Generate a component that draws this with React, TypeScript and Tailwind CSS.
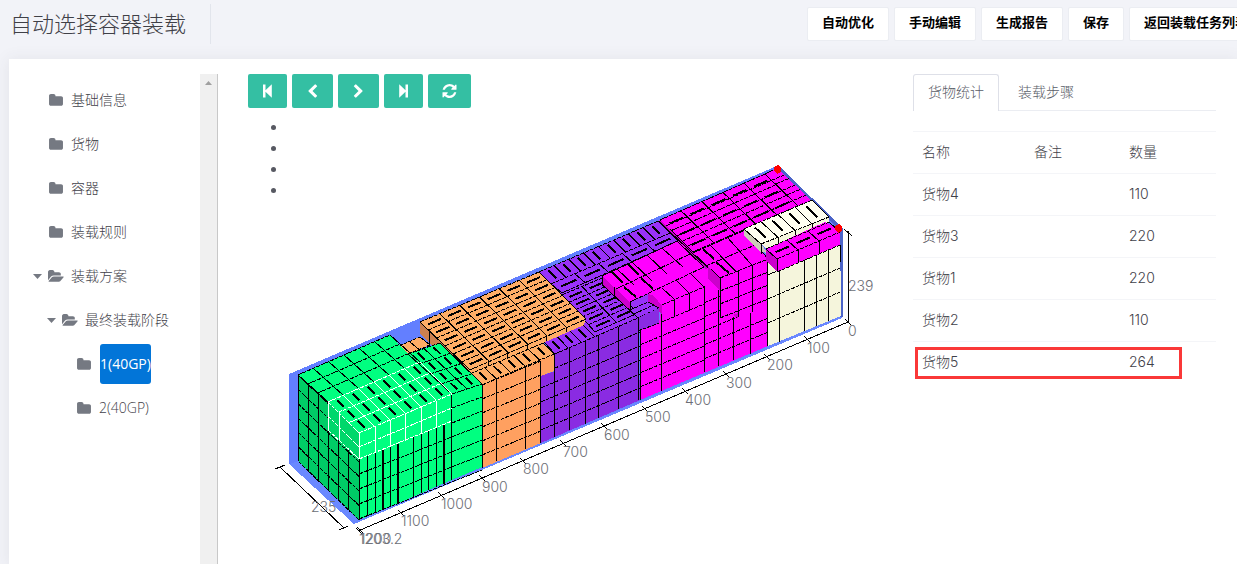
import React from "react";

type P = [number, number];
type Mark = "u" | "v";

const lerp = (a: P, b: P, t: number): P => [a[0] + (b[0] - a[0]) * t, a[1] + (b[1] - a[1]) * t];
const seg = (a: P, b: P) =>
  `M${a[0].toFixed(1)} ${a[1].toFixed(1)}L${b[0].toFixed(1)} ${b[1].toFixed(1)}`;

function Poly({ pts, fill }: { pts: P[]; fill: string }) {
  return <polygon points={pts.map((p) => p.join(",")).join(" ")} fill={fill} />;
}

/* A four-sided face a-b-c-d, split in nu columns (a to b) and nv rows (a to d). */
function Face({
  q,
  nu,
  nv,
  fill = "none",
  stroke = "#000",
  mark,
  markWidth = 2,
}: {
  q: [P, P, P, P];
  nu: number;
  nv: number;
  fill?: string;
  stroke?: string;
  mark?: Mark;
  markWidth?: number;
}) {
  const [a, b, c, d] = q;
  const at = (u: number, v: number) => lerp(lerp(a, b, u), lerp(d, c, u), v);
  let rows = "";
  let cols = "";
  let marks = "";
  for (let j = 0; j <= nv; j++) rows += seg(at(0, j / nv), at(1, j / nv));
  for (let i = 0; i <= nu; i++) cols += seg(at(i / nu, 0), at(i / nu, 1));
  if (mark) {
    for (let i = 0; i < nu; i++)
      for (let j = 0; j < nv; j++)
        marks +=
          mark === "u"
            ? seg(at((i + 0.2) / nu, (j + 0.5) / nv), at((i + 0.85) / nu, (j + 0.5) / nv))
            : seg(at((i + 0.5) / nu, (j + 0.15) / nv), at((i + 0.5) / nu, (j + 0.8) / nv));
  }
  return (
    <g fill="none">
      {fill !== "none" && <Poly pts={q} fill={fill} />}
      <path d={rows} stroke={stroke} strokeDasharray="4 1" />
      <path d={cols} stroke={stroke} />
      {mark && <path d={marks} stroke="#000" strokeWidth={markWidth} />}
    </g>
  );
}

function Verticals({ lines, stroke = "#000", w = 1 }: { lines: [number, number, number][]; stroke?: string; w?: number }) {
  return <path d={lines.map(([x, y1, y2]) => `M${x} ${y1}V${y2}`).join("")} stroke={stroke} strokeWidth={w} fill="none" />;
}

function Rows({ lines, stroke = "#000" }: { lines: [number, number, number, number][]; stroke?: string }) {
  return (
    <path
      d={lines.map(([x1, y1, x2, y2]) => `M${x1} ${y1}L${x2} ${y2}`).join("")}
      stroke={stroke}
      strokeDasharray="4 1"
      fill="none"
    />
  );
}

const BLUE = "#637fff";
const steps = (x1: number, y1: number, x2: number, y2: number, gap: number, n: number) =>
  Array.from({ length: n }, (_, i): [number, number, number, number] => [x1, y1 + gap * i, x2, y2 + gap * i]);

function GreenBlock() {
  const top: P[] = [[298, 375], [390, 335], [408, 354], [440, 343], [482, 384], [359, 433]];
  return (
    <g>
      <Poly pts={top} fill="#00ff80" />
      <Face q={[[359, 433], [298, 375], [298, 461], [359, 520]]} nu={6} nv={6} fill="#00cc66" />
      <Poly pts={[[359, 433], [482, 384], [482, 467], [359, 520]]} fill="#00ff80" />
      <Face q={[[298, 375], [390, 335], [420, 362], [328, 402]]} nu={6} nv={3} />
      <Face q={[[408, 354], [440, 343], [482, 384], [452, 394]]} nu={2} nv={4} mark="v" />
      <Rows lines={steps(359, 474, 482, 425, 15, 4)} />
      <Rows lines={[[452, 408, 482, 397], [452, 423, 482, 411], [452, 394, 482, 384]]} />
      <Verticals
        lines={[
          [359.5, 459, 520], [367.5, 456, 516], [375.5, 453, 513], [390.5, 447, 506], [413.5, 437, 497],
          [421.5, 434, 493], [428.5, 431, 490], [436.5, 428, 487], [451.5, 395, 480], [482.5, 384, 467],
        ]}
      />
      <Verticals lines={[[383, 450, 510], [398, 444, 503], [444, 425, 484]]} w={2} />
      <Face q={[[328, 402], [420, 362], [452, 394], [359, 433]]} nu={6} nv={3} stroke="#fff" mark="v" />
      <Poly pts={[[328, 402], [359, 433], [359, 459], [328, 430]]} fill="#00d76b" />
      <Rows stroke="#fff" lines={[[328, 402, 359, 433], [328, 416, 359, 447], [328, 430, 359, 459]]} />
      <Rows stroke="#fff" lines={[[359, 433, 452, 394], [359, 447, 452, 408], [359, 459, 452, 421]]} />
      <Verticals
        stroke="#fff"
        lines={[
          [328.5, 402, 430], [339.5, 412, 440], [359.5, 433, 459], [375.5, 427, 453], [390.5, 420, 446],
          [405.5, 414, 441], [421.5, 407, 434], [436.5, 401, 428],
        ]}
      />
    </g>
  );
}

function OrangeBlock() {
  return (
    <g>
      <Face q={[[399, 346], [420, 337], [430, 345], [408, 354]]} nu={2} nv={1} fill="#ffad66" />
      <Poly pts={[[482, 385], [554, 354], [554, 371], [541, 376], [541, 443], [482, 468]]} fill="#ffa060" />
      <Poly pts={[[420, 322], [470, 370], [470, 380], [420, 334]]} fill="#cc8050" />
      <Poly pts={[[462, 366], [586, 319], [584, 325], [543, 343], [554, 354], [482, 385]]} fill="#ffad66" />
      <Face q={[[420, 322], [539, 272], [586, 319], [470, 370]]} nu={6} nv={6} fill="#ffad66" mark="u" />
      <Face q={[[470, 374], [543, 343], [554, 354], [482, 385]]} nu={5} nv={1} mark="v" />
      <Rows lines={steps(482, 385, 541, 361, 14, 6)} />
      <Verticals
        lines={[
          [429.5, 331, 344], [482.5, 385, 468], [496.5, 379, 461], [525.5, 367, 449], [540.5, 361, 443],
          [488.5, 362, 366], [507.5, 353, 358], [527.5, 345, 349], [546.5, 337, 341], [566.5, 328, 332],
        ]}
      />
    </g>
  );
}

function PurpleBlock() {
  return (
    <g>
      <Poly
        pts={[[539, 272], [658, 221], [678, 241], [705, 268], [638, 328], [638, 318], [555, 354], [544, 342], [586, 319]]}
        fill="#9932f8"
      />
      <Face q={[[539, 272], [658, 221], [670, 233], [551, 284]]} nu={8} nv={1} mark="v" />
      <Face q={[[551, 284], [670, 233], [678, 241], [562, 293]]} nu={5} nv={1} mark="u" />
      <Face q={[[562, 295], [602, 278], [638, 313], [595, 332]]} nu={2} nv={5} mark="u" />
      <Face q={[[544, 342], [583, 325], [595, 337], [555, 354]]} nu={3} nv={1} mark="v" />
      <Poly pts={[[555, 354], [638, 318], [640, 400], [541, 443], [541, 376], [555, 371]]} fill="#8a2be2" />
      <Rows lines={steps(541, 374, 640, 332, 14, 5)} />
      <Rows lines={[[555, 354, 638, 318]]} />
      <Verticals
        lines={[
          [540.5, 376, 443], [554.5, 354, 437], [569.5, 348, 430], [585.5, 341, 424],
          [598.5, 336, 418], [618.5, 327, 409], [638.5, 318, 400],
        ]}
      />
    </g>
  );
}

/* Back part of the magenta goods, with the stack that stands out of it. */
function MagentaBack() {
  return (
    <g>
      <Poly
        pts={[[658, 221], [777, 168], [812, 201], [744, 230], [768, 259], [768, 346], [640, 400], [640, 330], [662, 320], [664, 290], [680, 245]]}
        fill="#f0f"
      />
      <Face q={[[660, 220], [765, 174], [798, 206], [693, 252]]} nu={5} nv={3} mark="u" />
      <Rows
        lines={[
          [666, 226, 784, 175], [677, 236, 795, 185], [688, 246, 806, 195],
          [765, 174, 777, 168], [776, 184, 790, 178], [787, 195, 801, 189],
        ]}
      />
      <Face q={[[693, 253], [745, 230], [768, 259], [720, 278]]} nu={3} nv={2} />
      <path d="M703 249L714 259M716 262L729 273" stroke="#000" strokeWidth={2} />
      <Poly pts={[[658, 221], [661, 221], [708, 267], [706, 270]]} fill="#c0c" />
      <path d="M658.500 221L708 268" stroke="#000" />
      <Rows lines={steps(704, 303, 768, 276, 14, 5)} />
      <Verticals lines={[[718.5, 290, 366], [733.5, 313, 360], [750.5, 312, 354], [767.5, 259, 346]]} />
      <Poly pts={[[720, 278], [768, 259], [768, 308], [738, 317], [720, 318]]} fill="#f0f" />
      <Poly pts={[[708, 267], [720, 278], [720, 290], [708, 279]]} fill="#c0c" />
      <Poly pts={[[733, 315], [738, 313], [738, 318]]} fill="#c0c" />
      <Rows lines={[[720, 278, 768, 259], [720, 304, 768, 285], [720, 291, 768, 272], [720, 318, 768, 299]]} />
      <Verticals lines={[[720.5, 278, 318], [738.5, 270, 317], [752.5, 265, 312], [767.5, 259, 346]]} />
    </g>
  );
}

/* Front part of the magenta goods and the purple box set in its corner. */
function MagentaFront() {
  return (
    <g>
      <Poly pts={[[602, 276], [678, 241], [704, 267], [704, 287], [662, 306], [648, 294], [630, 302]]} fill="#f0f" />
      <path
        d="M602 276L677 241L704 267M617 269L634 285M632 262L652 281M647 255L667 274M662 248L683 267"
        stroke="#000"
        fill="none"
      />
      <Rows lines={[[616, 289, 690, 254], [630, 302, 704, 267]]} />
      <path d="M648 294L662 306M662 288L674 299M677 281L689 293M691 274L704 287" stroke="#000" />
      <path d="M611 271L623 283M628 264L639 275M624 287L636 297M641 278L653 289" stroke="#000" strokeWidth={2} />
      <Poly pts={[[602, 276], [630, 302], [630, 311], [602, 285]]} fill="#c0c" />
      <path d="M602.500 276V285L638 318M614.500 287V296M630.500 302V309" stroke="#000" fill="none" />
      <Poly pts={[[640, 331], [659, 323], [662, 305], [704, 287], [704, 372], [640, 400]]} fill="#f0f" />
      <Rows lines={[[662, 305, 704, 287], [662, 322, 704, 304]]} />
      <Rows lines={steps(640, 345, 704, 318, 14, 4)} />
      <Verticals lines={[[640.5, 330, 400], [661.5, 305, 391], [674.5, 299, 317], [689.5, 293, 311], [704.5, 286, 372]]} />
      <Poly pts={[[648, 294], [654, 296], [662, 306], [662, 314], [648, 302]]} fill="#c0c" />
      <Face q={[[630, 310], [648, 302], [659, 308], [638, 318]]} nu={1} nv={2} fill="#9932f8" />
      <Poly pts={[[638, 318], [659, 308], [659, 323], [638, 331]]} fill="#8a2be2" />
      <Rows lines={[[638, 331, 659, 323]]} />
      <Verticals lines={[[638.5, 318, 331]]} />
    </g>
  );
}

function IvoryBlock() {
  return (
    <g>
      <Poly pts={[[768, 256], [840, 225], [841, 316], [768, 346]]} fill="#f5f5dc" />
      <Rows lines={[[768, 275, 777, 271], [768, 299, 840, 268], [768, 323, 840, 292], [777, 271, 840, 245]]} />
      <Verticals lines={[[767.5, 259, 346], [779.5, 271, 342], [804.5, 260, 331], [816.5, 255, 326], [828.5, 250, 321], [840.5, 245, 262]]} />
      <Poly pts={[[744, 229], [761, 244], [768, 253], [761, 252], [744, 236]]} fill="#ccccb8" />
      <Poly pts={[[761, 244], [829, 217], [829, 223], [768, 250]]} fill="#f5f5dc" />
      <Face q={[[744, 229], [812, 200], [829, 217], [761, 244]]} nu={4} nv={1} fill="#fffff0" mark="v" />
      <Verticals lines={[[761.5, 244, 254], [778.5, 238, 245], [795.5, 231, 237], [812.5, 224, 229]]} />
      <Poly pts={[[766, 249], [825, 222], [840, 230], [840, 245], [777, 272], [766, 261]]} fill="#f0f" />
      <Poly pts={[[766, 249], [777, 259], [777, 272], [766, 261]]} fill="#c0c" />
      <Face q={[[766, 249], [829, 222], [840, 232], [777, 259]]} nu={3} nv={1} mark="u" />
      <Rows lines={[[777, 272, 840, 245]]} />
      <Verticals lines={[[777.5, 259, 272], [798.5, 250, 263], [819.5, 241, 254]]} />
    </g>
  );
}

const TICKS = [0, 100, 200, 300, 400, 500, 600, 700, 800, 900, 1000, 1100, 1200];

function Axes() {
  const at = (n: number): P => [848 - (n * 488) / 1200, 322 + (n * 208) / 1200];
  return (
    <g>
      <g fill="none" stroke="#000">
        <path d="M848 322L358 531M280 467L344 528M848.500 231V322" />
        <path d="M275 469L285 465M339 530L348 526M844 229L852 236M356 528L362 534" />
        <path
          d={TICKS.map((n) => {
            const [x, y] = at(n);
            return seg([x - 3, y - 3], [x + 3, y + 3]);
          }).join("")}
        />
      </g>
      <g className="font-['Inter',sans-serif] text-[14px] font-light" fill="#6c6e76">
        {TICKS.map((n) => {
          const [x, y] = at(n);
          return (
            <text key={n} x={Math.round(x)} y={Math.floor(y) + 14}>
              {n}
            </text>
          );
        })}
        <text x={359} y={544}>1203.2</text>
        <text x={848} y={291}>239</text>
        <text x={311} y={512}>235</text>
      </g>
    </g>
  );
}

function LoadingView() {
  return (
    <svg
      viewBox="248 108 665 456"
      className="col-start-1 row-start-1 h-auto w-full"
      shapeRendering="crispEdges"
      role="img"
      aria-label="装载方案三维视图"
    >
      <Poly pts={[[289, 374], [777, 166], [842, 228], [842, 317], [354, 524], [289, 464]]} fill={BLUE} />
      <Poly pts={[[289, 464], [298, 461], [359, 520], [842, 315], [842, 318], [354, 524]]} fill="#6a88ff" />
      <Poly pts={[[780, 167], [843, 228], [843, 317], [840, 317], [838, 228], [775, 168]]} fill="#4c64c8" />
      <MagentaBack />
      <IvoryBlock />
      <PurpleBlock />
      <MagentaFront />
      <OrangeBlock />
      <GreenBlock />
      <Poly pts={[[774, 167], [778, 165], [781, 168], [781, 172], [777, 174], [774, 171]]} fill="#f00" />
      <Poly pts={[[835, 226], [839, 224], [842, 227], [842, 231], [838, 233], [835, 230]]} fill="#f00" />
      <Axes />
    </svg>
  );
}

function Folder() {
  return (
    <svg viewBox="64 0 1664 1792" className="h-[15px] w-[14px] shrink-0" fill="currentColor" aria-hidden="true">
      <path d="M1728 608v704q0 92-66 158t-158 66h-1216q-92 0-158-66t-66-158v-960q0-92 66-158t158-66h320q92 0 158 66t66 158v32h672q92 0 158 66t66 158z" />
    </svg>
  );
}

function FolderOpen() {
  return (
    <svg viewBox="0 0 1920 1792" className="h-[15px] w-4 shrink-0" fill="currentColor" aria-hidden="true">
      <path d="M1879 952q0 31-31 66l-336 396q-43 51-120.5 86.5t-143.5 35.5h-1088q-34 0-60.5-13t-26.5-43q0-31 31-66l336-396q43-51 120.5-86.5t143.5-35.5h1088q34 0 60.5 13t26.5 43zm-343-344v160h-832q-94 0-197 47.5t-164 119.5l-337 396-5 6q0-4-.5-12.5t-.5-12.5v-960q0-92 66-158t158-66h320q92 0 158 66t66 158v32h544q92 0 158 66t66 158z" />
    </svg>
  );
}

const TREE = [
  { label: "基础信息", indent: "pl-10", open: false, selected: false },
  { label: "货物", indent: "pl-10", open: false, selected: false },
  { label: "容器", indent: "pl-10", open: false, selected: false },
  { label: "装载规则", indent: "pl-10", open: false, selected: false },
  { label: "装载方案", indent: "pl-6", open: true, selected: false },
  { label: "最终装载阶段", indent: "pl-[38px]", open: true, selected: false },
  { label: "1(40GP)", indent: "pl-[68px]", open: false, selected: true },
  { label: "2(40GP)", indent: "pl-[68px]", open: false, selected: false },
];

function Tree() {
  return (
    <ul className="flex min-w-0 flex-1 flex-col gap-1 pt-[6px] text-[14px]">
      {TREE.map((n) => (
        <li key={n.label} className={`flex h-10 items-center text-[#757982] ${n.indent}`}>
          {n.open && (
            <svg viewBox="0 0 9 5" className="mr-[6px] h-[5px] w-[9px] shrink-0" fill="currentColor" aria-hidden="true">
              <path d="M0 0H9L4.500 5Z" />
            </svg>
          )}
          {n.open ? <FolderOpen /> : <Folder />}
          <a
            href="#"
            className={
              n.selected
                ? "ml-[9px] flex h-10 items-center rounded-[3px] bg-[#0275d8] pb-[2px] whitespace-nowrap text-white"
                : n.open
                  ? "ml-[7px] flex h-10 items-center pb-[2px] font-light whitespace-nowrap text-[#3f4149]"
                  : "ml-2 flex h-10 items-center pb-[2px] font-light whitespace-nowrap text-[#3f4149]"
            }
          >
            {n.label}
          </a>
        </li>
      ))}
    </ul>
  );
}

const TOOLS = [
  { label: "第一步", box: "0 0 11 14", size: "h-3.5 w-[11px]", d: "M1 0.500H3.500V6.300L9.800 0.300V13.700L3.500 7.700V13.500H1Z" },
  {
    label: "上一步",
    box: "250 0 1292 1664",
    size: "h-3.5 w-[13px]",
    d: "M1427 301l-531 531 531 531q19 19 19 45t-19 45l-166 166q-19 19-45 19t-45-19l-742-742q-19-19-19-45t19-45l742-742q19-19 45-19t45 19l166 166q19 19 19 45t-19 45z",
  },
  {
    label: "下一步",
    box: "250 0 1292 1664",
    size: "h-3.5 w-[13px]",
    d: "M1363 877l-742 742q-19 19-45 19t-45-19l-166-166q-19-19-19-45t19-45l531-531-531-531q-19-19-19-45t19-45l166-166q19-19 45-19t45 19l742 742q19 19 19 45t-19 45z",
  },
  { label: "最后一步", box: "0 0 11 14", size: "h-3.5 w-[11px]", d: "M10 0.500H7.500V6.300L1.200 0.300V13.700L7.500 7.700V13.500H10Z" },
  {
    label: "刷新",
    box: "0 0 1536 1536",
    size: "h-3.5 w-[15px]",
    d: "M1511 928q0 5-1 7-64 268-268 434.5t-478 166.5q-146 0-282.5-55t-243.5-157l-129 129q-19 19-45 19t-45-19-19-45v-448q0-26 19-45t45-19h448q26 0 45 19t19 45-19 45l-137 137q71 66 161 102t187 36q134 0 250-65t186-179q11-17 53-117 8-23 30-23h192q13 0 22.5 9.500t9.500 22.500zm25-800v448q0 26-19 45t-45 19h-448q-26 0-45-19t-19-45 19-45l138-138q-148-137-349-137-134 0-250 65t-186 179q-11 17-53 117-8 23-30 23h-199q-13 0-22.500-9.500t-9.500-22.500v-7q65-268 270-434.500t480-166.500q146 0 284 55.500t245 156.500l130-129q19-19 45-19t45 19 19 45z",
  },
];

const ROWS: [string, string][] = [
  ["货物4", "110"],
  ["货物3", "220"],
  ["货物1", "220"],
  ["货物2", "110"],
  ["货物5", "264"],
];

const ACTIONS = ["自动优化", "手动编辑", "生成报告", "保存", "返回装载任务列表"];

export default function App() {
  return (
    <div className="flex min-h-screen flex-col overflow-hidden bg-[#f2f3f8] font-['Open_Sans','Noto_Sans_CJK_SC',sans-serif] text-[14px] text-[#575962]">
      <header className="flex h-[59px] shrink-0 items-start">
        <div className="mt-1 flex h-10 items-center border-r border-[#e2e5ec] pr-6 pb-[3px] pl-[10px]">
          <h1 className="text-[22px] leading-9 font-light whitespace-nowrap text-[#3f4047]">自动选择容器装载</h1>
        </div>
        <nav className="-mr-[26px] ml-auto flex gap-[5px] pt-[7px]">
          {ACTIONS.map((a) => (
            <button
              key={a}
              type="button"
              className="flex h-[34px] shrink-0 items-center rounded-[2px] border border-[#ebedf2] bg-white px-[14px] pb-[2px] text-[13px] font-bold whitespace-nowrap text-black"
            >
              {a}
            </button>
          ))}
        </nav>
      </header>

      <main className="ml-[9px] flex flex-1 bg-white pt-[15px] shadow-[0_1px_15px_1px_rgba(69,65,78,0.08)]">
        <aside className="flex w-[209px] shrink-0 border-r border-[#c8c8c8]">
          <Tree />
          <div className="flex w-[17px] shrink-0 justify-center bg-[#f0f0f0] pt-[7px]" aria-hidden="true">
            <svg viewBox="0 0 7 4" className="h-1 w-[7px]" fill="#a0a0a0">
              <path d="M0 4L3.500 0L7 4Z" />
            </svg>
          </div>
        </aside>

        <section className="min-w-0 flex-1 pl-[30px]">
          <div className="flex gap-[5px]">
            {TOOLS.map((t) => (
              <button
                key={t.label}
                type="button"
                aria-label={t.label}
                className="flex h-[34px] items-center rounded-[2px] bg-[#34bfa3] px-[14px] text-white"
              >
                <svg viewBox={t.box} className={t.size} fill="currentColor" aria-hidden="true">
                  <path d={t.d} />
                </svg>
              </button>
            ))}
          </div>
          <div className="grid">
            <ul className="col-start-1 row-start-1 list-disc pt-[9px] pl-10 leading-[21px]">
              <li></li>
              <li></li>
              <li></li>
              <li></li>
            </ul>
            <LoadingView />
          </div>
        </section>

        <section className="mr-[21px] w-[303px] shrink-0 font-['Inter','Noto_Sans_CJK_SC',sans-serif] font-light">
          <div role="tablist" className="flex border-b border-[#ebedf2] text-[#5a5d68]">
            <button
              type="button"
              role="tab"
              aria-selected="true"
              className="-mb-px h-[37px] rounded-t-[3px] border border-b-0 border-[#dee0e8] bg-white px-[14px] pb-[3px] whitespace-nowrap"
            >
              货物统计
            </button>
            <button type="button" role="tab" aria-selected="false" className="h-9 px-[19px] pb-[2px] whitespace-nowrap">
              装载步骤
            </button>
          </div>
          <div className="relative mt-5">
            <table className="w-full table-fixed border-collapse text-left text-[#3f4149]">
              <thead>
                <tr className="h-[42px] border-t border-[#f4f5f8]">
                  <th className="w-[112px] pb-[3px] pl-[9px] font-light">名称</th>
                  <th className="w-[95px] pb-[3px] pl-[9px] font-light">备注</th>
                  <th className="pb-[3px] pl-[9px] font-light">数量</th>
                </tr>
              </thead>
              <tbody>
                {ROWS.map(([name, count]) => (
                  <tr key={name} className="h-[42px] border-t border-[#f4f5f8]">
                    <td className="pb-[3px] pl-[9px]">{name}</td>
                    <td></td>
                    <td className="pb-[3px] pl-[9px]">{count}</td>
                  </tr>
                ))}
              </tbody>
            </table>
            <div className="pointer-events-none absolute right-[34px] bottom-[5px] left-[2px] h-8 border-[3px] border-[#fa3838]" />
          </div>
        </section>
      </main>
    </div>
  );
}
